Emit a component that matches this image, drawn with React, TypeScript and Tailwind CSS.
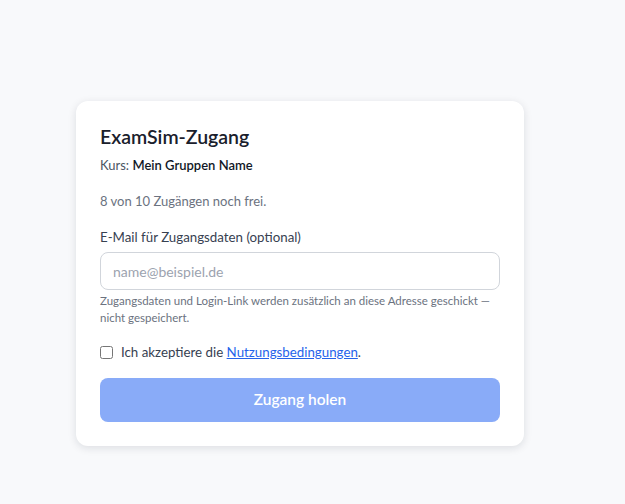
import React from "react";

export default function App() {
  const font = { fontFamily: "Lato, 'Noto Sans', sans-serif" };
  return (
    <div className="min-h-[504px] w-full bg-[#f8f9fb]" style={font}>
      <div className="flex w-[600px] justify-center pt-[101px]">
        <div className="w-[448px] rounded-xl bg-white px-6 pt-[22px] pb-6 shadow-[0_2px_8px_rgba(15,23,42,0.12)]">
          <h1 className="text-[19.5px] leading-7 font-semibold text-[#1a202c]">ExamSim-Zugang</h1>
          <p className="mt-[4px] text-[13px] leading-5 text-[#4b5563]">
            Kurs: <span className="font-semibold text-[#111827]">Mein Gruppen Name</span>
          </p>
          <p className="mt-4 text-[13px] leading-5 text-[#6b7280]">8 von 10 Zugängen noch frei.</p>

          <label className="mt-4 block text-[13.3px] leading-5 text-[#374151]">
            E-Mail für Zugangsdaten (optional)
          </label>
          <input
            type="email"
            placeholder="name@beispiel.de"
            className="mt-[5px] block h-[38px] w-full rounded-lg border border-[#d1d5db] px-3 text-[14px] text-[#111827] outline-none placeholder:text-[#9ca3af]"
          />
          <p className="mt-[2px] text-[11.5px] leading-[17px] text-[#6b7280]">
            Zugangsdaten und Login-Link werden zusätzlich an diese Adresse geschickt — nicht gespeichert.
          </p>

          <label className="mt-[16px] flex items-center gap-2 text-[13.3px] leading-5 text-[#374151]">
            <input type="checkbox" className="h-[13px] w-[13px] rounded-sm border-[#6b7280]" />
            <span>
              Ich akzeptiere die{" "}
              <a href="#" className="text-[#2563eb] underline">
                Nutzungsbedingungen
              </a>
              .
            </span>
          </label>

          <button
            type="button"
            className="mt-4 flex h-[44px] w-full items-center justify-center rounded-lg bg-[#89abf8] text-[15.5px] font-semibold text-white"
          >
            Zugang holen
          </button>
        </div>
      </div>
    </div>
  );
}
